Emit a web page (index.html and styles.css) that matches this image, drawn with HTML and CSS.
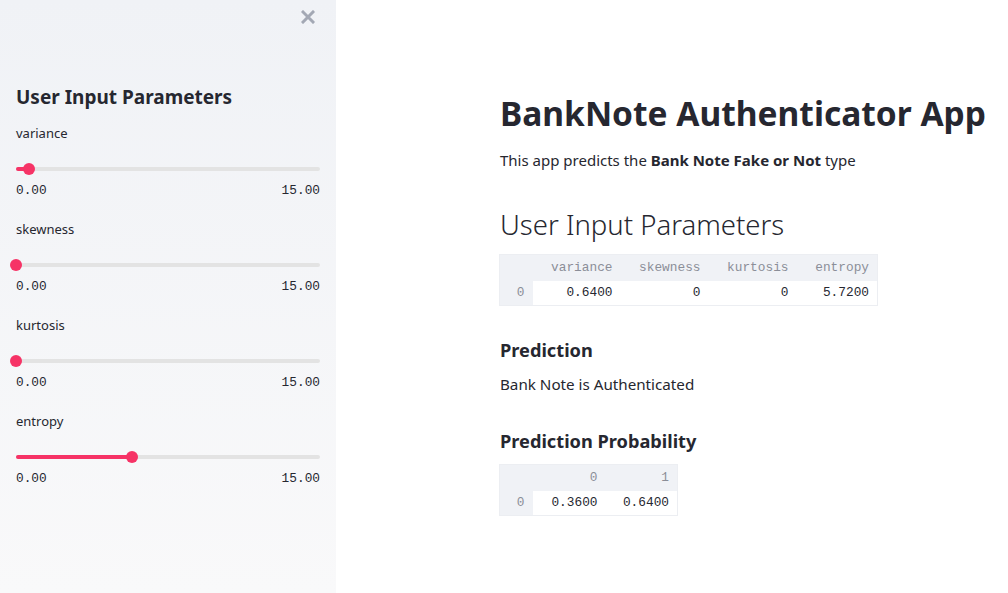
FILE: index.html
```html
<!DOCTYPE html>
<html>
<head>
<meta charset="utf-8">
<link rel="stylesheet" href="styles.css">
</head>
<body>
<div class="app">
  <aside class="sidebar">
    <div class="close-row">
      <svg class="close" width="14" height="14" viewBox="0 0 14 14"><path d="M2 2 L12 12 M12 2 L2 12" stroke="#a3a8b4" stroke-width="3" stroke-linecap="square"/></svg>
    </div>
    <h3 class="side-title">User Input Parameters</h3>
    <div class="slider">
      <div class="slider-label">variance</div>
      <div class="track"><div class="fill" style="width:4.27%"></div><div class="thumb" style="left:4.27%"></div></div>
      <div class="ticks"><span>0.00</span><span>15.00</span></div>
    </div>
    <div class="slider">
      <div class="slider-label">skewness</div>
      <div class="track"><div class="fill" style="width:0%"></div><div class="thumb" style="left:0%"></div></div>
      <div class="ticks"><span>0.00</span><span>15.00</span></div>
    </div>
    <div class="slider">
      <div class="slider-label">kurtosis</div>
      <div class="track"><div class="fill" style="width:0%"></div><div class="thumb" style="left:0%"></div></div>
      <div class="ticks"><span>0.00</span><span>15.00</span></div>
    </div>
    <div class="slider">
      <div class="slider-label">entropy</div>
      <div class="track"><div class="fill" style="width:38.13%"></div><div class="thumb" style="left:38.13%"></div></div>
      <div class="ticks"><span>0.00</span><span>15.00</span></div>
    </div>
  </aside>
  <main class="main">
    <h1 class="title">BankNote Authenticator App</h1>
    <p class="intro">This app predicts the <strong>Bank Note Fake or Not</strong> type</p>
    <h2 class="subtitle">User Input Parameters</h2>
    <table class="df df-params">
      <thead><tr><th class="idx"></th><th>variance</th><th>skewness</th><th>kurtosis</th><th class="last">entropy</th></tr></thead>
      <tbody><tr><th class="idx">0</th><td>0.6400</td><td>0</td><td>0</td><td class="last">5.7200</td></tr></tbody>
    </table>
    <h3 class="section">Prediction</h3>
    <p class="result">Bank Note is Authenticated</p>
    <h3 class="section section-2">Prediction Probability</h3>
    <table class="df df-prob">
      <thead><tr><th class="idx"></th><th>0</th><th class="last">1</th></tr></thead>
      <tbody><tr><th class="idx">0</th><td>0.3600</td><td class="last">0.6400</td></tr></tbody>
    </table>
  </main>
</div>
</body>
</html>
```

FILE: styles.css
```css
* { box-sizing: border-box; }
html, body { margin: 0; padding: 0; }
body {
  font-family: "Noto Sans", "Open Sans", sans-serif;
  color: #262730;
  background: #ffffff;
  width: 1008px;
  height: 593px;
  overflow: hidden;
}
.app { display: flex; height: 593px; }

.sidebar {
  width: 336px;
  flex: 0 0 336px;
  background: linear-gradient(180deg, #f0f2f6 0%, #f9f9fa 100%);
  padding: 0 16px;
}
.close-row { display: flex; justify-content: flex-end; padding: 10px 5px 0 0; height: 84px; }
.close { display: block; }
.side-title {
  margin: 0 0 13px 0;
  font-size: 19px;
  font-weight: 700;
  line-height: 26px;
}
.slider { height: 96px; }
.slider-label { font-size: 13px; line-height: 20px; height: 20px; }
.track {
  position: relative;
  margin-top: 24px;
  height: 4px;
  border-radius: 2px;
  background: #e3e3e3;
}
.fill { position: absolute; left: 0; top: 0; height: 4px; border-radius: 2px; background: #f63366; }
.thumb {
  position: absolute;
  top: -4px;
  width: 12px;
  height: 12px;
  margin-left: -6px;
  border-radius: 50%;
  background: #f63366;
}
.ticks {
  display: flex;
  justify-content: space-between;
  margin-top: 12px;
  font-family: "Liberation Mono", "DejaVu Sans Mono", monospace;
  font-size: 12.8px;
  line-height: 16px;
  color: #262730;
}

.main { flex: 1; padding: 88px 0 0 164px; white-space: nowrap; }
.title { margin: 0; font-size: 33.5px; font-weight: 700; line-height: 50px; letter-spacing: 0; }
.intro { margin: 10px 0 0 0; font-size: 15px; line-height: 24px; }
.intro strong { font-weight: 700; }
.subtitle { margin: 35px 0 0 0; font-size: 27.5px; font-weight: 300; line-height: 36px; }

.df {
  margin-top: 11px;
  margin-left: -1px;
  border-collapse: collapse;
  border: 1px solid #eceef2;
  font-family: "Liberation Mono", "DejaVu Sans Mono", monospace;
  font-size: 12.8px;
}
.df th, .df td { height: 25px; padding: 0 8px 0 0; text-align: right; font-weight: 400; }
.df thead th { background: #f0f2f6; color: #8b8e98; height: 26px; }
.df tbody th.idx { background: #f0f2f6; color: #8b8e98; }
.df td { background: #fff; color: #262730; }
.df .idx { width: 33px; text-align: right; padding-right: 8px; }
.df-params th, .df-params td { width: 88px; }
.df-params .last { width: 81px; }
.df-params .idx { width: 33px; }
.df-prob th, .df-prob td { width: 73px; }
.df-prob .last { width: 72px; }
.df-prob .idx { width: 33px; }

.section { margin: 29px 0 0 0; font-size: 18.2px; font-weight: 700; line-height: 30px; }
.result { margin: 7px 0 0 0; font-size: 15.2px; line-height: 24px; }
.section-2 { margin-top: 30px; }
.df-prob { margin-top: 8px; }
```
